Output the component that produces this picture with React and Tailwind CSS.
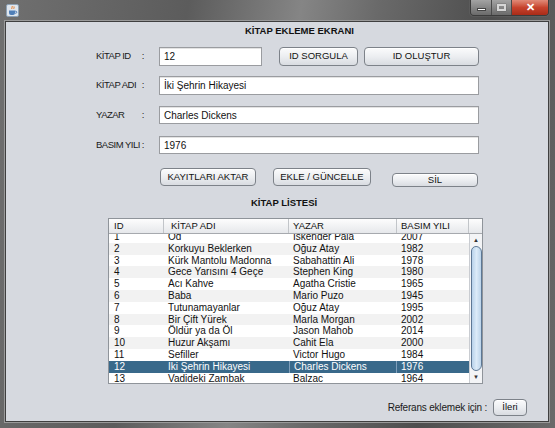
import React from "react";

const rows = [
  ["1", "Od", "İskender Pala", "2007"],
  ["2", "Korkuyu Beklerken", "Oğuz Atay", "1982"],
  ["3", "Kürk Mantolu Madonna", "Sabahattin Ali", "1978"],
  ["4", "Gece Yarısını 4 Geçe", "Stephen King", "1980"],
  ["5", "Acı Kahve", "Agatha Cristie", "1965"],
  ["6", "Baba", "Mario Puzo", "1945"],
  ["7", "Tutunamayanlar", "Oğuz Atay", "1995"],
  ["8", "Bir Çift Yürek", "Marla Morgan", "2002"],
  ["9", "Öldür ya da Öl", "Jason Mahob", "2014"],
  ["10", "Huzur Akşamı", "Cahit Ela", "2000"],
  ["11", "Sefiller", "Victor Hugo", "1984"],
  ["12", "İki Şehrin Hikayesi", "Charles Dickens", "1976"],
  ["13", "Vadideki Zambak", "Balzac", "1964"],
];

const SELECTED = 11;

function JavaIcon() {
  return (
    <svg width="13" height="13" viewBox="0 0 13 13">
      <rect x="0.5" y="0.5" width="12" height="12" rx="1.5" fill="#dfe6ee" stroke="#8da1b5" />
      <path d="M6 2c1 1-1 2 0 3M8 2.5c.8.8-.8 1.6 0 2.4" stroke="#e8761f" strokeWidth="1" fill="none" />
      <path d="M3 6.5h6v2.5a2 2 0 0 1-2 2H5a2 2 0 0 1-2-2z" fill="#4f7fb8" />
      <path d="M9 7.2h.8a1 1 0 0 1 0 2H9" stroke="#4f7fb8" fill="none" />
    </svg>
  );
}

function Btn({ children, className = "" }) {
  return (
    <button
      type="button"
      className={`flex items-center justify-center rounded-[4px] border border-[#7d8289] bg-gradient-to-b from-[#fbfbfc] via-[#eceef1] to-[#d9dce1] text-[9.5px] text-[#111] shadow-[inset_0_1px_0_#fff] ${className}`}
    >
      {children}
    </button>
  );
}

function Field({ label, value, width }) {
  return (
    <div className="flex h-full items-center">
      <div className="flex w-[48px] justify-between text-[9.5px] tracking-[-0.5px] text-[#1a1a1a]">
        <span>{label}</span>
        <span>:</span>
      </div>
      <div
        className={`ml-[15px] flex h-full items-center border border-[#9a9ca0] bg-white pl-[4px] text-[10px] text-[#111] shadow-[inset_0_1px_0_#e3e3e3] ${width}`}
      >
        {value}
      </div>
    </div>
  );
}

function Scrollbar() {
  return (
    <div className="flex h-[149px] w-[13px] flex-col border-l border-[#c9ccd1] bg-[#f3f4f6]">
      <div className="flex h-[12px] items-center justify-center text-[6px] text-[#333]">▲</div>
      <div className="mx-[0.5px] flex-1 rounded-[6px] rounded-l-[5px] border border-[#5d7895] bg-gradient-to-r from-[#b8d2ea] via-[#dcebf8] to-[#bcd4ea]" />
      <div className="flex h-[12px] items-center justify-center text-[6px] text-[#333]">▼</div>
    </div>
  );
}

function BookTable() {
  return (
    <div className="ml-[102px] mt-[9px] w-[375px] border border-[#8f949a] bg-white">
      <div className="flex h-[15px] border-b border-[#a6a9ae] bg-gradient-to-b from-[#fdfdfd] to-[#e6e8eb] text-[9.5px] text-[#111]">
        <div className="flex w-[55px] items-center border-r border-[#c2c5c9] pl-[5px]">ID</div>
        <div className="flex w-[125px] items-center border-r border-[#c2c5c9] pl-[7px]">KİTAP ADI</div>
        <div className="flex w-[108px] items-center border-r border-[#c2c5c9] pl-[4px]">YAZAR</div>
        <div className="flex w-[72px] items-center border-r border-[#c2c5c9] pl-[4px]">BASIM YILI</div>
        <div className="w-[13px]" />
      </div>
      <div className="flex">
        <div className="h-[149px] w-[360px] overflow-hidden">
          <div className="mt-[-3px]">
            {rows.map((r, i) => {
              const sel = i === SELECTED;
              const bg = sel ? "bg-[#39698a] text-white" : i % 2 === 1 ? "bg-[#f2f2f2] text-[#111]" : "bg-white text-[#111]";
              return (
                <div key={r[0]} className={`flex h-[11.8px] text-[10px] leading-[11.8px] ${bg}`}>
                  <div className="w-[55px] pl-[5px]">{r[0]}</div>
                  <div className="w-[125px] pl-[4px]">{r[1]}</div>
                  <div className={`w-[108px] pl-[4px] ${sel ? "border-x border-[#7f9fbb]" : ""}`}>{r[2]}</div>
                  <div className="w-[72px] pl-[4px]">{r[3]}</div>
                </div>
              );
            })}
          </div>
        </div>
        <Scrollbar />
      </div>
    </div>
  );
}

export default function App() {
  return (
    <div
      className="flex h-[428px] w-[555px] flex-col bg-[linear-gradient(100deg,#707070_0%,#5c5c5c_30%,#858585_48%,#6a6a6a_60%,#4e4e4e_78%,#6a6a6a_100%)]"
      style={{ fontFamily: '"Liberation Sans", Arial, sans-serif' }}
    >
      {/* title bar */}
      <div className="flex h-[21px] items-start">
        <div className="ml-[6px] mt-[4px]">
          <JavaIcon />
        </div>
        <div className="ml-auto mr-[6px] flex h-[16px] overflow-hidden rounded-b-[4px] border border-t-0 border-[#3c3c3c] shadow-[0_0_1px_#aaa]">
          <div className="flex w-[21px] items-center justify-center border-r border-[#4a4a4a] bg-gradient-to-b from-[#a3a3a3] to-[#6b6b6b]">
            <div className="mt-[4px] h-[3px] w-[9px] border border-[#444] bg-white" />
          </div>
          <div className="flex w-[20px] items-center justify-center border-r border-[#4a4a4a] bg-gradient-to-b from-[#a3a3a3] to-[#6b6b6b]">
            <div className="h-[7px] w-[9px] border-2 border-[#d6d6d6] shadow-[0_0_1px_#444]" />
          </div>
          <div className="flex w-[36px] items-center justify-center bg-gradient-to-b from-[#e08a78] via-[#c7432d] to-[#a92b18] text-[11px] font-bold text-white">
            ✕
          </div>
        </div>
      </div>

      {/* content panel */}
      <div className="mb-[6px] ml-[5px] mr-[6px] flex-1 border border-[#3f3f3f] bg-[#d6d9df] outline outline-1 outline-[#9a9a9a]">
        <div className="mt-[3px] h-[12px] pl-[239px] text-[9.5px] font-bold leading-[12px] text-[#111]">
          KİTAP EKLEME EKRANI
        </div>

        <div className="ml-[90px] mt-[10px] flex h-[19px] items-center">
          <Field label="KİTAP ID" value="12" width="w-[103px]" />
          <Btn className="ml-[17px] h-[19px] w-[79px]">ID SORGULA</Btn>
          <Btn className="ml-[6px] h-[19px] w-[115px]">ID OLUŞTUR</Btn>
        </div>
        <div className="ml-[90px] mt-[10px] h-[19px]">
          <Field label="KİTAP ADI" value="İki Şehrin Hikayesi" width="w-[320px]" />
        </div>
        <div className="ml-[90px] mt-[11px] h-[18px]">
          <Field label="YAZAR" value="Charles Dickens" width="w-[320px]" />
        </div>
        <div className="ml-[90px] mt-[12px] h-[18px]">
          <Field label="BASIM YILI" value="1976" width="w-[320px]" />
        </div>

        <div className="mt-[14px] flex h-[19px] items-start">
          <Btn className="ml-[154px] h-[18px] w-[96px]">KAYITLARI AKTAR</Btn>
          <Btn className="ml-[17px] h-[18px] w-[98px]">EKLE / GÜNCELLE</Btn>
          <Btn className="ml-[21px] mt-[5px] h-[14px] w-[86px]">SİL</Btn>
        </div>

        <div className="mt-[10px] h-[12px] pl-[245px] text-[9.5px] font-bold leading-[12px] text-[#111]">
          KİTAP LİSTESİ
        </div>

        <BookTable />

        <div className="mr-[21px] mt-[15px] flex items-center justify-end">
          <span className="text-[10px] tracking-[-0.2px] text-[#1a1a1a]">Referans eklemek için :</span>
          <Btn className="ml-[6px] h-[17px] w-[34px]">İleri</Btn>
        </div>
      </div>
    </div>
  );
}
